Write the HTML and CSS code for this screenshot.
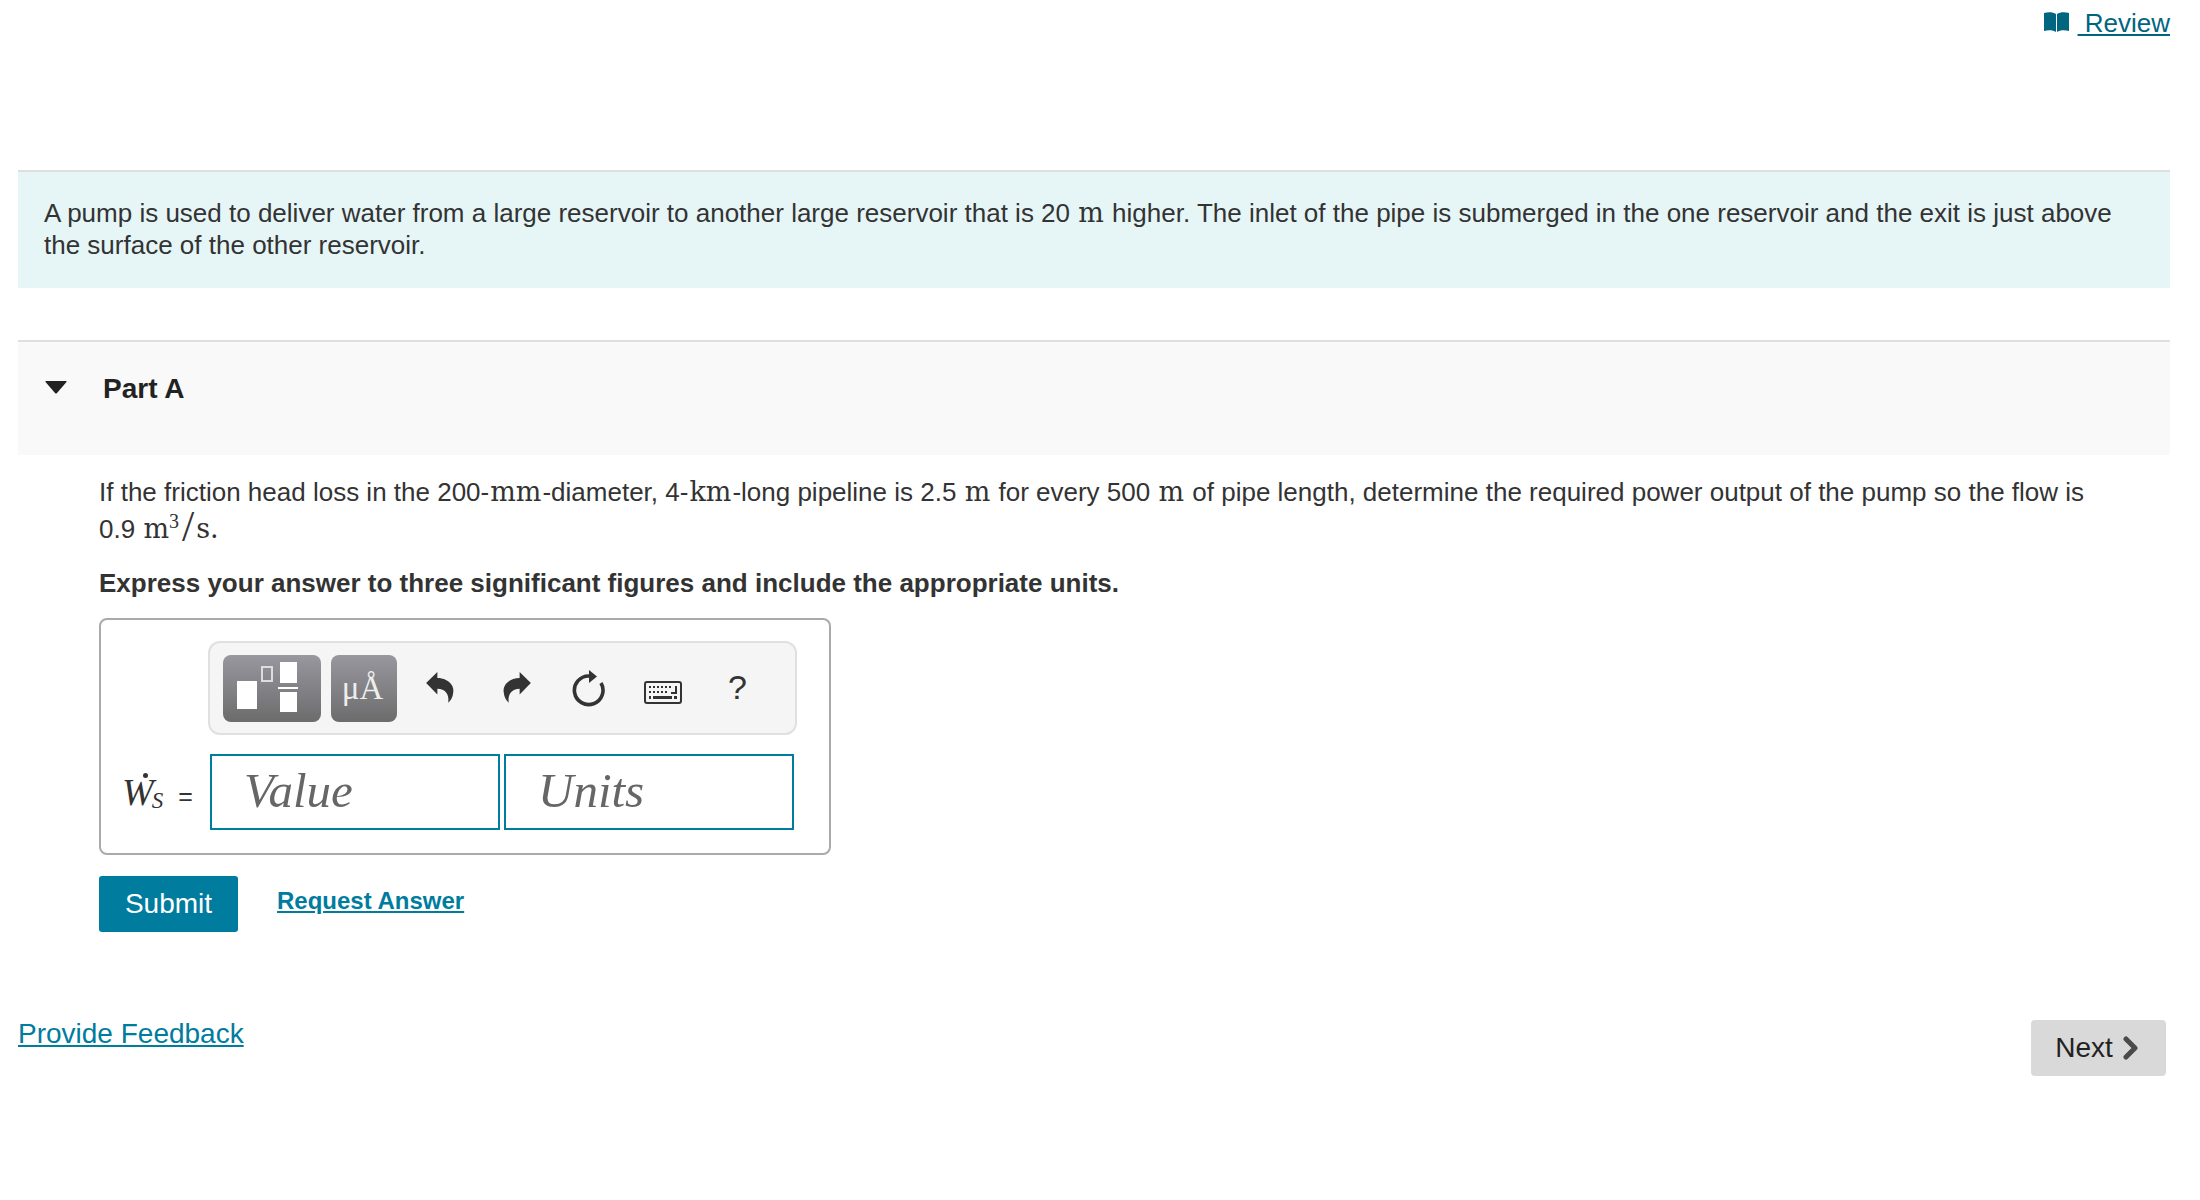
FILE: index.html
```html
<!DOCTYPE html>
<html lang="en">
<head>
    <meta charset="UTF-8">
    <title>Part A</title>
    <link rel="stylesheet" href="styles.css">
</head>
<body>

<div class="page">
    <div class="top-bar">
        <a class="review" href="#">
            <svg class="book" viewBox="0 0 25 20"><path d="M0 1 C4 0 9 0 12 2 V20 C9 18 4 18 0 19 Z M13 2 C16 0 21 0 25 1 V19 C21 18 16 18 13 20 Z"/></svg>
            <span class="review-text">&nbsp;Review</span>
        </a>
    </div>

    <div class="intro">
        A pump is used to deliver water from a large reservoir to another large reservoir that is 20 <span class="math">m</span> higher. The inlet of the pipe is submerged in the one reservoir and the exit is just above<br>the surface of the other reservoir.
    </div>

    <div class="part-head">
        <svg class="caret" viewBox="0 0 22 13"><path d="M1 0 H21 Q22 0 21.5 1 L12 12 Q11 13 10 12 L0.5 1 Q0 0 1 0 Z"/></svg>
        <h3 class="part-title">Part A</h3>
    </div>

    <div class="part-body">
        <p class="question">If the friction head loss in the 200-<span class="math">mm</span>-diameter, 4-<span class="math">km</span>-long pipeline is 2.5 <span class="math">m</span> for every 500 <span class="math">m</span> of pipe length, determine the required power output of the pump so the flow is<br>0.9 <span class="math">m<sup>3</sup><span class="slash">/</span>s.</span></p>
        <p class="instruction">Express your answer to three significant figures and include the appropriate units.</p>

        <div class="answer-box">
            <div class="toolbar">
                <button class="tool-btn templates">
                    <svg viewBox="0 0 98 67" width="98" height="67">
                        <rect x="14" y="26" width="20" height="28" fill="#fff"/>
                        <rect x="39" y="12" width="10" height="14" fill="none" stroke="#ddd" stroke-width="2"/>
                        <rect x="57" y="7" width="17" height="21" fill="#fff"/>
                        <rect x="55" y="32" width="20" height="2" fill="#fff"/>
                        <rect x="57" y="37" width="17" height="20" fill="#fff"/>
                    </svg>
                </button>
                <button class="tool-btn symbols">μÅ</button>

                <svg class="tool-icon undo" viewBox="0 0 90 100"><path d="M3 36 L37 3 V21 C65 21 90 40 85 66 C84 78 78 90 70 96 C74 70 60 54 37 54 V71 Z"/></svg>
                <svg class="tool-icon redo" viewBox="0 0 90 100"><path d="M3 36 L37 3 V21 C65 21 90 40 85 66 C84 78 78 90 70 96 C74 70 60 54 37 54 V71 Z"/></svg>
                <svg class="tool-icon reload" viewBox="0 0 40 42">
                    <path d="M20 10 A14.300 14.300 0 1 0 32 17" fill="none" stroke="#333" stroke-width="3.6"/>
                    <path d="M20 4 L28 10.500 L20 17 Z"/>
                </svg>
                <svg class="tool-icon keyboard" viewBox="0 0 38 23">
                    <rect x="1" y="1" width="36" height="21" rx="2" fill="none" stroke="#333" stroke-width="2"/>
                    <path d="M5 5h2v2h-2zM9 5h2v2h-2zM13 5h2v2h-2zM17 5h2v2h-2zM21 5h2v2h-2zM25 5h2v2h-2zM30 5h3v8h-6v-2h4v-6zM5 10h2v2h-2zM9 10h2v2h-2zM13 10h2v2h-2zM17 10h2v2h-2zM21 10h2v2h-2zM5 15h2v3h-2zM9 15h19v3h-19zM30 15h3v3h-3z"/>
                </svg>
                <span class="tool-help">?</span>
            </div>

            <div class="answer-row">
                <div class="answer-label"><span class="w-dot">W</span><sub>S</sub><span class="equals">=</span></div>
                <div class="answer-field">Value</div>
                <div class="answer-field">Units</div>
            </div>
        </div>

        <div class="actions">
            <button class="submit">Submit</button>
            <a class="request" href="#">Request Answer</a>
        </div>
    </div>

    <div class="footer">
        <a class="feedback" href="#">Provide Feedback</a>
        <button class="next">Next
            <svg class="chevron" viewBox="0 0 16 24"><path d="M3 3 L12 12 L3 21" fill="none" stroke="#4a4a4a" stroke-width="5" stroke-linecap="round" stroke-linejoin="round"/></svg>
        </button>
    </div>
</div>

</body>
</html>
```

FILE: styles.css
```css
body {
    margin: 0;
    background-color: #fff;
    color: #333;
    font-family: "Liberation Sans", Arial, sans-serif;
    font-size: 26px;
    line-height: 32px;
}
.page {
    margin-left: 18px;
    width: 2152px;
}
.top-bar {
    height: 170px;
    display: flex;
    justify-content: flex-end;
    box-sizing: border-box;
    padding-top: 7px;
}
.review {
    display: flex;
    align-items: flex-start;
    color: #00667f;
    height: 32px;
    text-decoration: none;
}
.review-text {
    text-decoration: underline;
}
.book {
    width: 25px;
    height: 20px;
    margin-top: 5px;
    margin-right: 9px;
    fill: #00667f;
}
.intro {
    height: 118px;
    box-sizing: border-box;
    border-top: 2px solid #dfdfdf;
    padding: 25px 26px 0;
    background-color: #e6f6f7;
}
.math {
    font-family: "DejaVu Serif", "Liberation Serif", serif;
    font-size: 27px;
    line-height: 0;
    margin: 0 1px;
}
.math sup {
    font-family: "Liberation Serif", serif;
    font-size: 20px;
    line-height: 0;
}
.slash {
    font-family: "Liberation Serif", serif;
    font-size: 44px;
    margin: 0 2px 0 3px;
    line-height: 0;
    vertical-align: -3px;
}
.part-head {
    margin-top: 52px;
    height: 115px;
    box-sizing: border-box;
    border-top: 2px solid #dfdfdf;
    background-color: #f9f9f9;
    display: flex;
    align-items: flex-start;
    padding: 31px 0 0 27px;
}
.caret {
    width: 22px;
    height: 13px;
    margin-top: 8px;
    fill: #222;
}
.part-title {
    margin: 0 0 0 36px;
    font-size: 28px;
    line-height: 32px;
    color: #222;
}
.part-body {
    padding: 19px 60px 0 81px;
}
.question {
    margin: 0;
    line-height: 37px;
}
.instruction {
    margin: 19px 0 0;
    font-weight: bold;
}
.answer-box {
    margin-top: 19px;
    width: 732px;
    height: 237px;
    box-sizing: border-box;
    border: 2px solid #aaa;
    border-radius: 8px;
    padding: 21px 0 0 107px;
}
.toolbar {
    width: 589px;
    height: 94px;
    box-sizing: border-box;
    border: 2px solid #e0e0e0;
    border-radius: 12px;
    background-color: #f5f5f5;
    display: flex;
    align-items: center;
    padding-left: 13px;
}
.tool-btn {
    height: 67px;
    border: 0;
    padding: 0;
    border-radius: 8px;
    background: linear-gradient(#99979f, #6c6c6c);
    color: #eee;
    font-family: "Liberation Serif", serif;
    font-size: 33px;
}
.templates {
    width: 98px;
}
.templates svg {
    display: block;
}
.symbols {
    width: 66px;
    margin-left: 10px;
    padding: 0 3px 0 0;
    line-height: 40px;
}
.tool-icon {
    fill: #333;
    flex: none;
}
.undo, .redo {
    width: 30px;
    height: 33px;
    margin-bottom: 2px;
}
.undo {
    margin-left: 28px;
}
.redo {
    margin-left: 47px;
    transform: scaleX(-1);
}
.reload {
    width: 40px;
    height: 42px;
    margin-left: 37px;
    margin-bottom: 3px;
}
.keyboard {
    width: 38px;
    height: 23px;
    margin-left: 35px;
    margin-top: 9px;
}
.tool-help {
    margin-left: 46px;
    margin-bottom: 3px;
    font-size: 34px;
    color: #333;
}
.answer-row {
    display: flex;
    align-items: center;
    margin: 19px 0 0 -86px;
}
.answer-label {
    width: 88px;
    font-family: "Liberation Serif", serif;
    font-style: italic;
    font-size: 38px;
    white-space: nowrap;
    padding-top: 4px;
}
.w-dot {
    position: relative;
}
.w-dot::before {
    content: "";
    position: absolute;
    left: 21px;
    top: 2px;
    width: 5px;
    height: 5px;
    border-radius: 50%;
    background-color: #333;
}
.answer-label sub {
    font-size: 23px;
    line-height: 0;
    vertical-align: -3px;
    margin-left: -2px;
}
.equals {
    font-family: "Liberation Sans", sans-serif;
    font-style: normal;
    font-size: 25px;
    margin-left: 15px;
}
.answer-field {
    width: 290px;
    height: 76px;
    box-sizing: border-box;
    border: 2px solid #007c9e;
    margin-right: 4px;
    padding-left: 32px;
    font-family: "Liberation Serif", serif;
    font-style: italic;
    font-size: 49px;
    line-height: 70px;
    color: #666;
}
.actions {
    display: flex;
    align-items: flex-start;
    margin-top: 21px;
}
.submit {
    width: 139px;
    height: 56px;
    border: 0;
    border-radius: 3px;
    background-color: #007c9e;
    color: #fff;
    font-family: inherit;
    font-size: 28px;
}
.request {
    margin: 9px 0 0 39px;
    font-size: 24px;
    font-weight: bold;
    color: #007c9e;
}
.footer {
    display: flex;
    justify-content: space-between;
    align-items: flex-start;
    margin-top: 88px;
}
.feedback {
    margin-top: 1px;
    font-size: 28px;
    line-height: 26px;
    color: #007c9e;
}
.next {
    margin-right: 4px;
    width: 135px;
    height: 56px;
    border: 0;
    border-radius: 4px;
    background-color: #d9d9d9;
    color: #222;
    font-family: inherit;
    font-size: 28px;
    display: flex;
    align-items: center;
    justify-content: center;
    gap: 10px;
    padding: 0 3px 0 0;
}
.chevron {
    width: 16px;
    height: 24px;
}
```
